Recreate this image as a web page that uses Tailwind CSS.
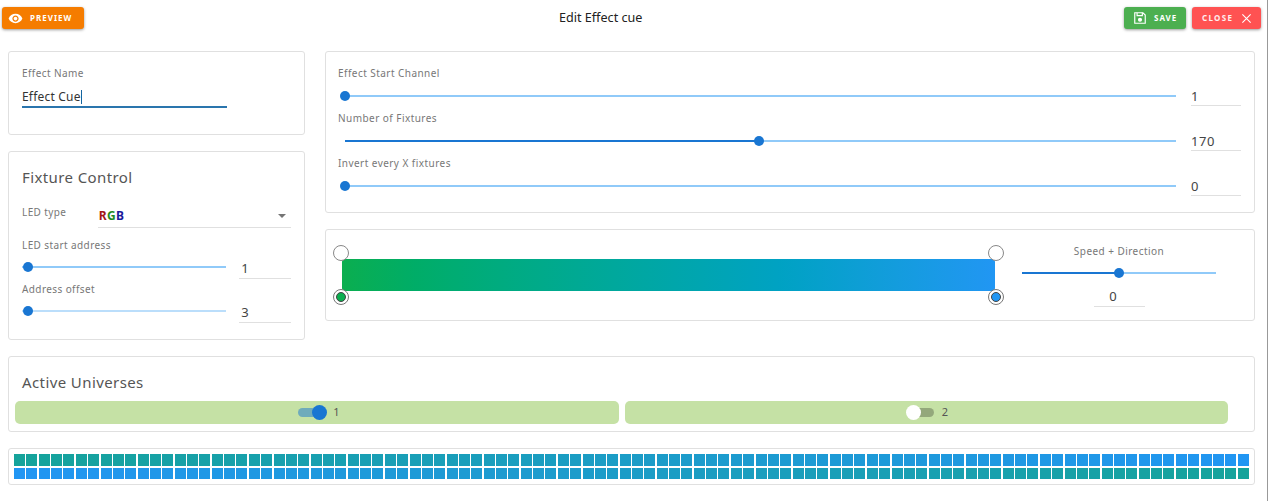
<!DOCTYPE html>
<html lang="en">
<head>
    <meta charset="UTF-8">
    <title>Edit Effect cue</title>
    <script src="https://cdn.jsdelivr.net/npm/@tailwindcss/browser@4"></script>
</head>
<body class="bg-white overflow-hidden font-['Noto_Sans',sans-serif] text-[#333]">
<div class="w-[1268px] h-[501px] border-r border-[#999] flex flex-col">

    <!-- Top bar -->
    <header class="h-[36px] pl-[2px] pr-[6px] pt-[7px] flex justify-between items-start relative">
        <button class="h-[22px] w-[82px] rounded-[3px] bg-[#f57c00] text-white shadow-[0_1px_3px_rgba(0,0,0,.4)] flex items-center pl-[6px] gap-[7px] text-[8px] font-bold tracking-[1px]">
            <svg class="w-[15px] h-[15px]" viewBox="0 0 24 24" fill="white"><path d="M12 4.5C7 4.5 2.73 7.61 1 12c1.73 4.39 6 7.5 11 7.5s9.27-3.11 11-7.5c-1.73-4.39-6-7.5-11-7.5zM12 17c-2.76 0-5-2.24-5-5s2.24-5 5-5 5 2.24 5 5-2.24 5-5 5zm0-8c-1.66 0-3 1.34-3 3s1.34 3 3 3 3-1.34 3-3-1.34-3-3-3z"/></svg>
            PREVIEW
        </button>
        <h1 class="absolute left-[559px] top-[9px] text-[12.6px] leading-[17px] text-[#222]">Edit Effect cue</h1>
        <div class="flex gap-[6px]">
            <button class="h-[22px] w-[62px] rounded-[3px] bg-[#4caf50] text-white shadow-[0_1px_3px_rgba(0,0,0,.4)] flex items-center pl-[9px] gap-[7px] text-[8px] font-bold tracking-[1px]">
                <svg class="w-[14px] h-[14px]" viewBox="0 0 24 24" fill="none" stroke="white" stroke-width="2"><path d="M4 3h13l4 4v14H3V3z"/><path d="M7 3v5h9V3"/><circle cx="12" cy="15" r="2.5" fill="white"/></svg>
                SAVE
            </button>
            <button class="h-[22px] w-[69px] rounded-[3px] bg-[#ff5252] text-white/90 shadow-[0_1px_3px_rgba(0,0,0,.4)] flex items-center pl-[10px] gap-[8px] text-[8px] font-bold tracking-[1.3px]">
                CLOSE
                <svg class="w-[11px] h-[11px]" viewBox="0 0 12 12" stroke="white" stroke-width="1.2"><path d="M1.5 1.5l9 9M10.5 1.5l-9 9"/></svg>
            </button>
        </div>
    </header>

    <main class="pl-[8px] pr-[12px] pt-[15px] flex flex-col">
        <div class="flex gap-[20px]">
            <!-- Left column -->
            <div class="w-[297px] flex flex-col gap-[16px]">
                <section class="h-[84px] border border-[#e0e0e0] rounded-[3px] pl-[13px] pt-[14px]">
                    <label class="block text-[10px] leading-[14px] tracking-[.4px] text-[#777]">Effect Name</label>
                    <div class="w-[205px] h-[25px] mt-[3px] border-b-2 border-[#2a75ad] text-[12px] leading-[17px] tracking-[.2px] flex items-center pt-[4px]">
                        Effect Cue<span class="w-px h-[14px] bg-[#1565a0]"></span>
                    </div>
                </section>
                <section class="h-[189px] border border-[#e0e0e0] rounded-[3px] pl-[13px] pr-[13px] pt-[14px]">
                    <h2 class="text-[15px] leading-[22px] tracking-[.4px] text-[#555]">Fixture Control</h2>
                    <div class="flex mt-[11px] h-[39px]">
                        <label class="w-[76px] pt-[6px] text-[10px] leading-[14px] tracking-[.4px] text-[#777]">LED type</label>
                        <div class="w-[194px] h-[29px] border-b border-[#e0e0e0] flex justify-between items-center pt-[5px] pl-[1px] pr-[5px]">
                            <span class="text-[12px] font-bold tracking-[.3px]"><span class="text-[#a31515]">R</span><span class="text-[#1e8a1e]">G</span><span class="text-[#1a1a9c]">B</span></span>
                            <span class="w-0 h-0 border-x-[4px] border-x-transparent border-t-[4px] border-t-[#757575]"></span>
                        </div>
                    </div>
                    <label class="block text-[10px] leading-[14px] tracking-[.4px] text-[#777]">LED start address</label>
                    <div class="flex items-center h-[30px]">
                        <div class="relative w-[205px] h-[2px] bg-[#90caf9]">
                            <span class="absolute left-[1px] top-[-4px] w-[10px] h-[10px] rounded-full bg-[#1976d2]"></span>
                        </div>
                        <div class="ml-[13px] w-[52px] h-[24px] border-b border-[#e0e0e0] text-[13px] text-[#444] tracking-[.6px] leading-[26px] pl-[2px]">1</div>
                    </div>
                    <label class="block text-[10px] leading-[14px] tracking-[.4px] text-[#777]">Address offset</label>
                    <div class="flex items-center h-[30px]">
                        <div class="relative w-[205px] h-[2px] bg-[#bbdefb]">
                            <span class="absolute left-[1px] top-[-4px] w-[10px] h-[10px] rounded-full bg-[#1976d2]"></span>
                        </div>
                        <div class="ml-[13px] w-[52px] h-[24px] border-b border-[#e0e0e0] text-[13px] text-[#444] tracking-[.6px] leading-[26px] pl-[2px]">3</div>
                    </div>
                </section>
            </div>

            <!-- Right column -->
            <div class="w-[930px] flex flex-col gap-[16px]">
                <section class="h-[162px] border border-[#e0e0e0] rounded-[3px] pl-[12px] pr-[13px] pt-[14px]">
                    <label class="block text-[10px] leading-[14px] tracking-[.45px] text-[#777]">Effect Start Channel</label>
                    <div class="flex items-center h-[31px]">
                        <div class="relative ml-[7px] w-[831px] h-[2px] bg-[#90caf9]">
                            <span class="absolute left-[-5px] top-[-4px] w-[10px] h-[10px] rounded-full bg-[#1976d2]"></span>
                        </div>
                        <div class="ml-[15px] w-[50px] h-[23px] mb-[2px] border-b border-[#e0e0e0] text-[13px] text-[#444] tracking-[.6px] leading-[26px]">1</div>
                    </div>
                    <label class="block text-[10px] leading-[14px] tracking-[.45px] text-[#777]">Number of Fixtures</label>
                    <div class="flex items-center h-[31px]">
                        <div class="relative ml-[7px] w-[831px] h-[2px] bg-[#90caf9]">
                            <div class="h-full w-[414px] bg-[#1976d2]"></div>
                            <span class="absolute left-[409px] top-[-4px] w-[10px] h-[10px] rounded-full bg-[#1976d2]"></span>
                        </div>
                        <div class="ml-[15px] w-[50px] h-[23px] mb-[2px] border-b border-[#e0e0e0] text-[13px] text-[#444] tracking-[.6px] leading-[26px]">170</div>
                    </div>
                    <label class="block text-[10px] leading-[14px] tracking-[.45px] text-[#777]">Invert every X fixtures</label>
                    <div class="flex items-center h-[31px]">
                        <div class="relative ml-[7px] w-[831px] h-[2px] bg-[#90caf9]">
                            <span class="absolute left-[-5px] top-[-4px] w-[10px] h-[10px] rounded-full bg-[#1976d2]"></span>
                        </div>
                        <div class="ml-[15px] w-[50px] h-[23px] mb-[2px] border-b border-[#e0e0e0] text-[13px] text-[#444] tracking-[.6px] leading-[26px]">0</div>
                    </div>
                </section>

                <section class="h-[92px] border border-[#e0e0e0] rounded-[3px] flex">
                    <div class="relative ml-[16px] mt-[29px] w-[653px] h-[32px] rounded-[3px] bg-gradient-to-r from-[#0bae4f] to-[#2196f3]">
                        <span class="absolute left-[-9px] top-[-14px] w-[16px] h-[16px] rounded-full bg-white border-[1.5px] border-[#888]"></span>
                        <span class="absolute right-[-9px] top-[-14px] w-[16px] h-[16px] rounded-full bg-white border-[1.5px] border-[#888]"></span>
                        <span class="absolute left-[-9px] top-[30px] w-[16px] h-[16px] rounded-full bg-white border-[1.5px] border-[#777] flex items-center justify-center"><span class="w-[10px] h-[10px] rounded-full bg-[#0bae4f] border border-[#444]"></span></span>
                        <span class="absolute right-[-9px] top-[30px] w-[16px] h-[16px] rounded-full bg-white border-[1.5px] border-[#777] flex items-center justify-center"><span class="w-[10px] h-[10px] rounded-full bg-[#2196f3] border border-[#444]"></span></span>
                    </div>
                    <div class="ml-[27px] w-[194px] flex flex-col items-center">
                        <label class="mt-[14px] text-[10px] leading-[14px] tracking-[.45px] text-[#777]">Speed + Direction</label>
                        <div class="relative mt-[14px] w-[194px] h-[2px] bg-[#90caf9]">
                            <div class="h-full w-[97px] bg-[#1976d2]"></div>
                            <span class="absolute left-[92px] top-[-4px] w-[10px] h-[10px] rounded-full bg-[#1976d2]"></span>
                        </div>
                        <div class="mt-[9px] w-[51px] h-[24px] border-b border-[#e0e0e0] text-[13px] text-[#444] leading-[26px] text-center pr-[12px]">0</div>
                    </div>
                </section>
            </div>
        </div>

        <!-- Active universes -->
        <section class="mt-[16px] w-[1247px] h-[76px] border border-[#e0e0e0] rounded-[3px] pl-[6px] pt-[14px]">
            <h2 class="ml-[7px] text-[15px] leading-[22px] tracking-[.4px] text-[#555]">Active Universes</h2>
            <div class="flex gap-[6px] mt-[8px]">
                <div class="w-[604px] h-[23px] rounded-[5px] bg-[#c5e1a5] flex items-center justify-center pl-[6px] gap-[7px] text-[11px] text-[#555]">
                    <span class="relative w-[28px] h-[9px] rounded-full bg-[#1976d2]/50 ml-[-2px]">
                        <span class="absolute right-[-1px] top-[-3px] w-[15px] h-[15px] rounded-full bg-[#1976d2]"></span>
                    </span>
                    1
                </div>
                <div class="w-[603px] h-[23px] rounded-[5px] bg-[#c5e1a5] flex items-center justify-center pl-[2px] gap-[8px] text-[11px] text-[#555]">
                    <span class="relative w-[27px] h-[9px] rounded-full bg-black/25">
                        <span class="absolute left-[-1px] top-[-3px] w-[15px] h-[15px] rounded-full bg-white"></span>
                    </span>
                    2
                </div>
            </div>
        </section>

        <!-- Fixture preview strip -->
        <section class="mt-[16px] w-[1247px] h-[37px] border border-[#e0e0e0] rounded-[3px] pl-[5px] pt-[5px]">
            <div id="row1" class="flex gap-[1.364px] h-[12px]"></div>
            <div id="row2" class="flex gap-[1.364px] h-[11px] mt-[2px]"></div>
        </section>
    </main>
</div>

<script>
    // colour per fixture along the green -> blue gradient
    var a = [21, 163, 155], b = [33, 150, 243];
    function mix(t) {
        return "rgb(" + a.map(function (v, i) { return Math.round(v + (b[i] - v) * t); }).join(",") + ")";
    }
    for (var i = 0; i < 100; i++) {
        var t = i / 99;
        [["row1", t], ["row2", 1 - t]].forEach(function (r) {
            var d = document.createElement("div");
            d.className = "w-[11px] h-full shrink-0";
            d.style.backgroundColor = mix(r[1]);
            document.getElementById(r[0]).appendChild(d);
        });
    }
</script>
</body>
</html>
